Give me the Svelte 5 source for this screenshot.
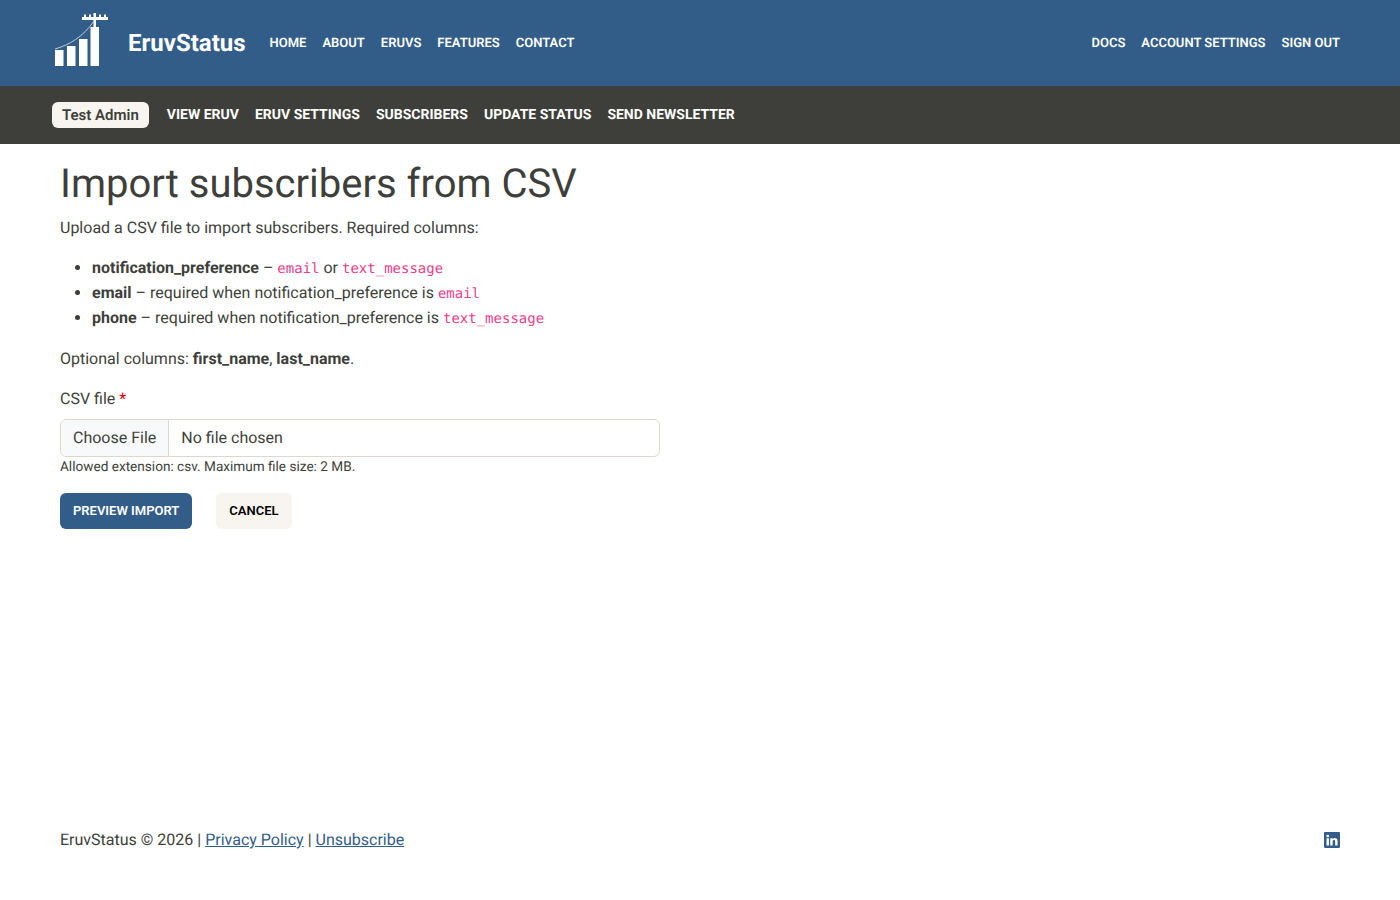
<script>
  const mainLinks = ['Home', 'About', 'Eruvs', 'Features', 'Contact']
  const rightLinks = ['Docs', 'Account Settings', 'Sign Out']
  const adminLinks = ['View Eruv', 'Eruv Settings', 'Subscribers', 'Update Status', 'Send Newsletter']
</script>

<nav class="topbar">
  <a class="brand" href="#home">
    <svg class="logo" width="58" height="58" viewBox="0 0 58 58" aria-hidden="true">
      <rect x="2" y="38" width="8.5" height="16" fill="#fff" />
      <rect x="14" y="34" width="8.5" height="20" fill="#fff" />
      <rect x="26" y="27" width="8.5" height="27" fill="#fff" />
      <rect x="37.5" y="15" width="8.5" height="39" fill="#fff" />
      <path d="M2 37 C16 33 30 25 41 9" fill="none" stroke="#dfe6ee" stroke-width="0.8" />
      <rect x="40.5" y="1" width="2.5" height="14" fill="#fff" />
      <rect x="29" y="5" width="26" height="3" fill="#fff" />
      <rect x="31" y="2.5" width="2" height="3" fill="#fff" />
      <rect x="36" y="2.5" width="2" height="3" fill="#fff" />
      <rect x="46" y="2.5" width="2" height="3" fill="#fff" />
      <rect x="51" y="2.5" width="2" height="3" fill="#fff" />
    </svg>
    <span class="brand-name">EruvStatus</span>
  </a>
  <ul class="links">
    {#each mainLinks as link}
      <li><a href="#main">{link}</a></li>
    {/each}
  </ul>
  <ul class="links right">
    {#each rightLinks as link}
      <li><a href="#main">{link}</a></li>
    {/each}
  </ul>
</nav>

<nav class="adminbar">
  <span class="pill">Test Admin</span>
  <ul class="links">
    {#each adminLinks as link}
      <li><a href="#admin">{link}</a></li>
    {/each}
  </ul>
</nav>

<main>
  <h1>Import subscribers from CSV</h1>
  <p>Upload a CSV file to import subscribers. Required columns:</p>
  <ul class="columns">
    <li><strong>notification_preference</strong> – <code>email</code> or <code>text_message</code></li>
    <li><strong>email</strong> – required when notification_preference is <code>email</code></li>
    <li><strong>phone</strong> – required when notification_preference is <code>text_message</code></li>
  </ul>
  <p>Optional columns: <strong>first_name</strong>, <strong>last_name</strong>.</p>

  <form>
    <div class="label">CSV file <span class="req">*</span></div>
    <div class="file">
      <span class="file-btn">Choose File</span>
      <span class="file-name">No file chosen</span>
    </div>
    <div class="help">Allowed extension: csv. Maximum file size: 2 MB.</div>
    <div class="actions">
      <button type="button" class="btn primary">Preview Import</button>
      <button type="button" class="btn light">Cancel</button>
    </div>
  </form>
</main>

<footer>
  <div>
    EruvStatus © 2026 | <a href="#privacy">Privacy Policy</a> | <a href="#unsub">Unsubscribe</a>
  </div>
  <svg width="16" height="16" viewBox="0 0 16 16" aria-label="LinkedIn">
    <path fill="#325d88" d="M0 1.146C0 .513.526 0 1.175 0h13.65C15.474 0 16 .513 16 1.146v13.708c0 .633-.526 1.146-1.175 1.146H1.175C.526 16 0 15.487 0 14.854zm4.943 12.248V6.169H2.542v7.225zm-1.2-8.212c.837 0 1.358-.554 1.358-1.248-.015-.709-.52-1.248-1.342-1.248S2.4 3.226 2.4 3.934c0 .694.521 1.248 1.327 1.248zm4.908 8.212V9.359c0-.216.016-.432.08-.586.173-.431.568-.878 1.232-.878.869 0 1.216.662 1.216 1.634v3.865h2.401V9.25c0-2.22-1.184-3.252-2.764-3.252-1.274 0-1.845.7-2.165 1.193v.025h-.016l.016-.025V6.169h-2.4c.03.678 0 7.225 0 7.225z" />
  </svg>
</footer>

<style>
  :global(body) {
    font-family: Roboto, "Liberation Sans", sans-serif;
    font-size: 16px;
    line-height: 24px;
    color: #3e3f3a;
    background: #fff;
    text-rendering: geometricPrecision;
  }
  ul.links {
    list-style: none;
    margin: 0;
    padding: 0;
    display: flex;
    gap: 16px;
  }
  .links a {
    color: #fff;
    text-decoration: none;
    text-transform: uppercase;
    font-weight: 600;
    font-size: 13px;
  }
  .topbar {
    height: 86px;
    box-sizing: border-box;
    background: #325d88;
    display: flex;
    align-items: center;
    padding: 0 60px 1px 53px;
  }
  .brand {
    display: flex;
    align-items: center;
    color: #fff;
    text-decoration: none;
    margin-right: 24px;
  }
  .logo { margin-right: 17px; margin-top: -4px; }
  .brand-name {
    font-size: 24px;
    font-weight: 700;
  }
  .links.right { margin-left: auto; }
  .adminbar {
    height: 58px;
    background: #3e3f3a;
    display: flex;
    align-items: center;
    padding: 0 52px 2px;
    box-sizing: border-box;
  }
  .pill {
    background: #f8f5f0;
    color: #3e3f3a;
    font-weight: 600;
    font-size: 15px;
    line-height: 26px;
    padding: 0 10px;
    border-radius: 6px;
    margin-right: 18px;
    position: relative;
    top: 1px;
  }
  .adminbar .links a { font-size: 14px; font-weight: 700; }
  main { padding: 16px 60px 0; }
  h1 {
    margin: 0 0 8px;
    font-size: 40px;
    line-height: 48px;
    font-weight: 400;
  }
  p { margin: 0 0 16px; }
  .columns { margin: 0 0 16px; padding-left: 32px; }
  strong { font-weight: 700; }
  code {
    font-family: "DejaVu Sans Mono", monospace;
    font-size: 14px;
    color: #e83e8c;
  }
  form { width: 600px; }
  .label { margin-bottom: 8px; }
  .req { color: #e00; }
  .file {
    display: flex;
    height: 38px;
    box-sizing: border-box;
    border: 1px solid #dfd7ca;
    border-radius: 6px;
    overflow: hidden;
    align-items: stretch;
    line-height: 36px;
  }
  .file-btn {
    background: #f8f9fa;
    border-right: 1px solid #dfd7ca;
    padding: 0 12px;
  }
  .file-name { padding: 0 12px; }
  .help { font-size: 13.6px; line-height: 21px; }
  .actions { display: flex; gap: 24px; margin-top: 15px; }
  .btn {
    font-family: inherit;
    font-size: 13px;
    font-weight: 600;
    text-transform: uppercase;
    height: 36px;
    padding: 0 13px 1px;
    border: 0;
    border-radius: 6px;
  }
  .primary { background: #325d88; color: #fff; }
  .light { background: #f8f5f0; color: #000; }
  footer {
    position: absolute;
    left: 0;
    right: 0;
    top: 828px;
    padding: 0 60px;
    display: flex;
    justify-content: space-between;
    align-items: center;
  }
  footer a { color: #325d88; }
</style>
